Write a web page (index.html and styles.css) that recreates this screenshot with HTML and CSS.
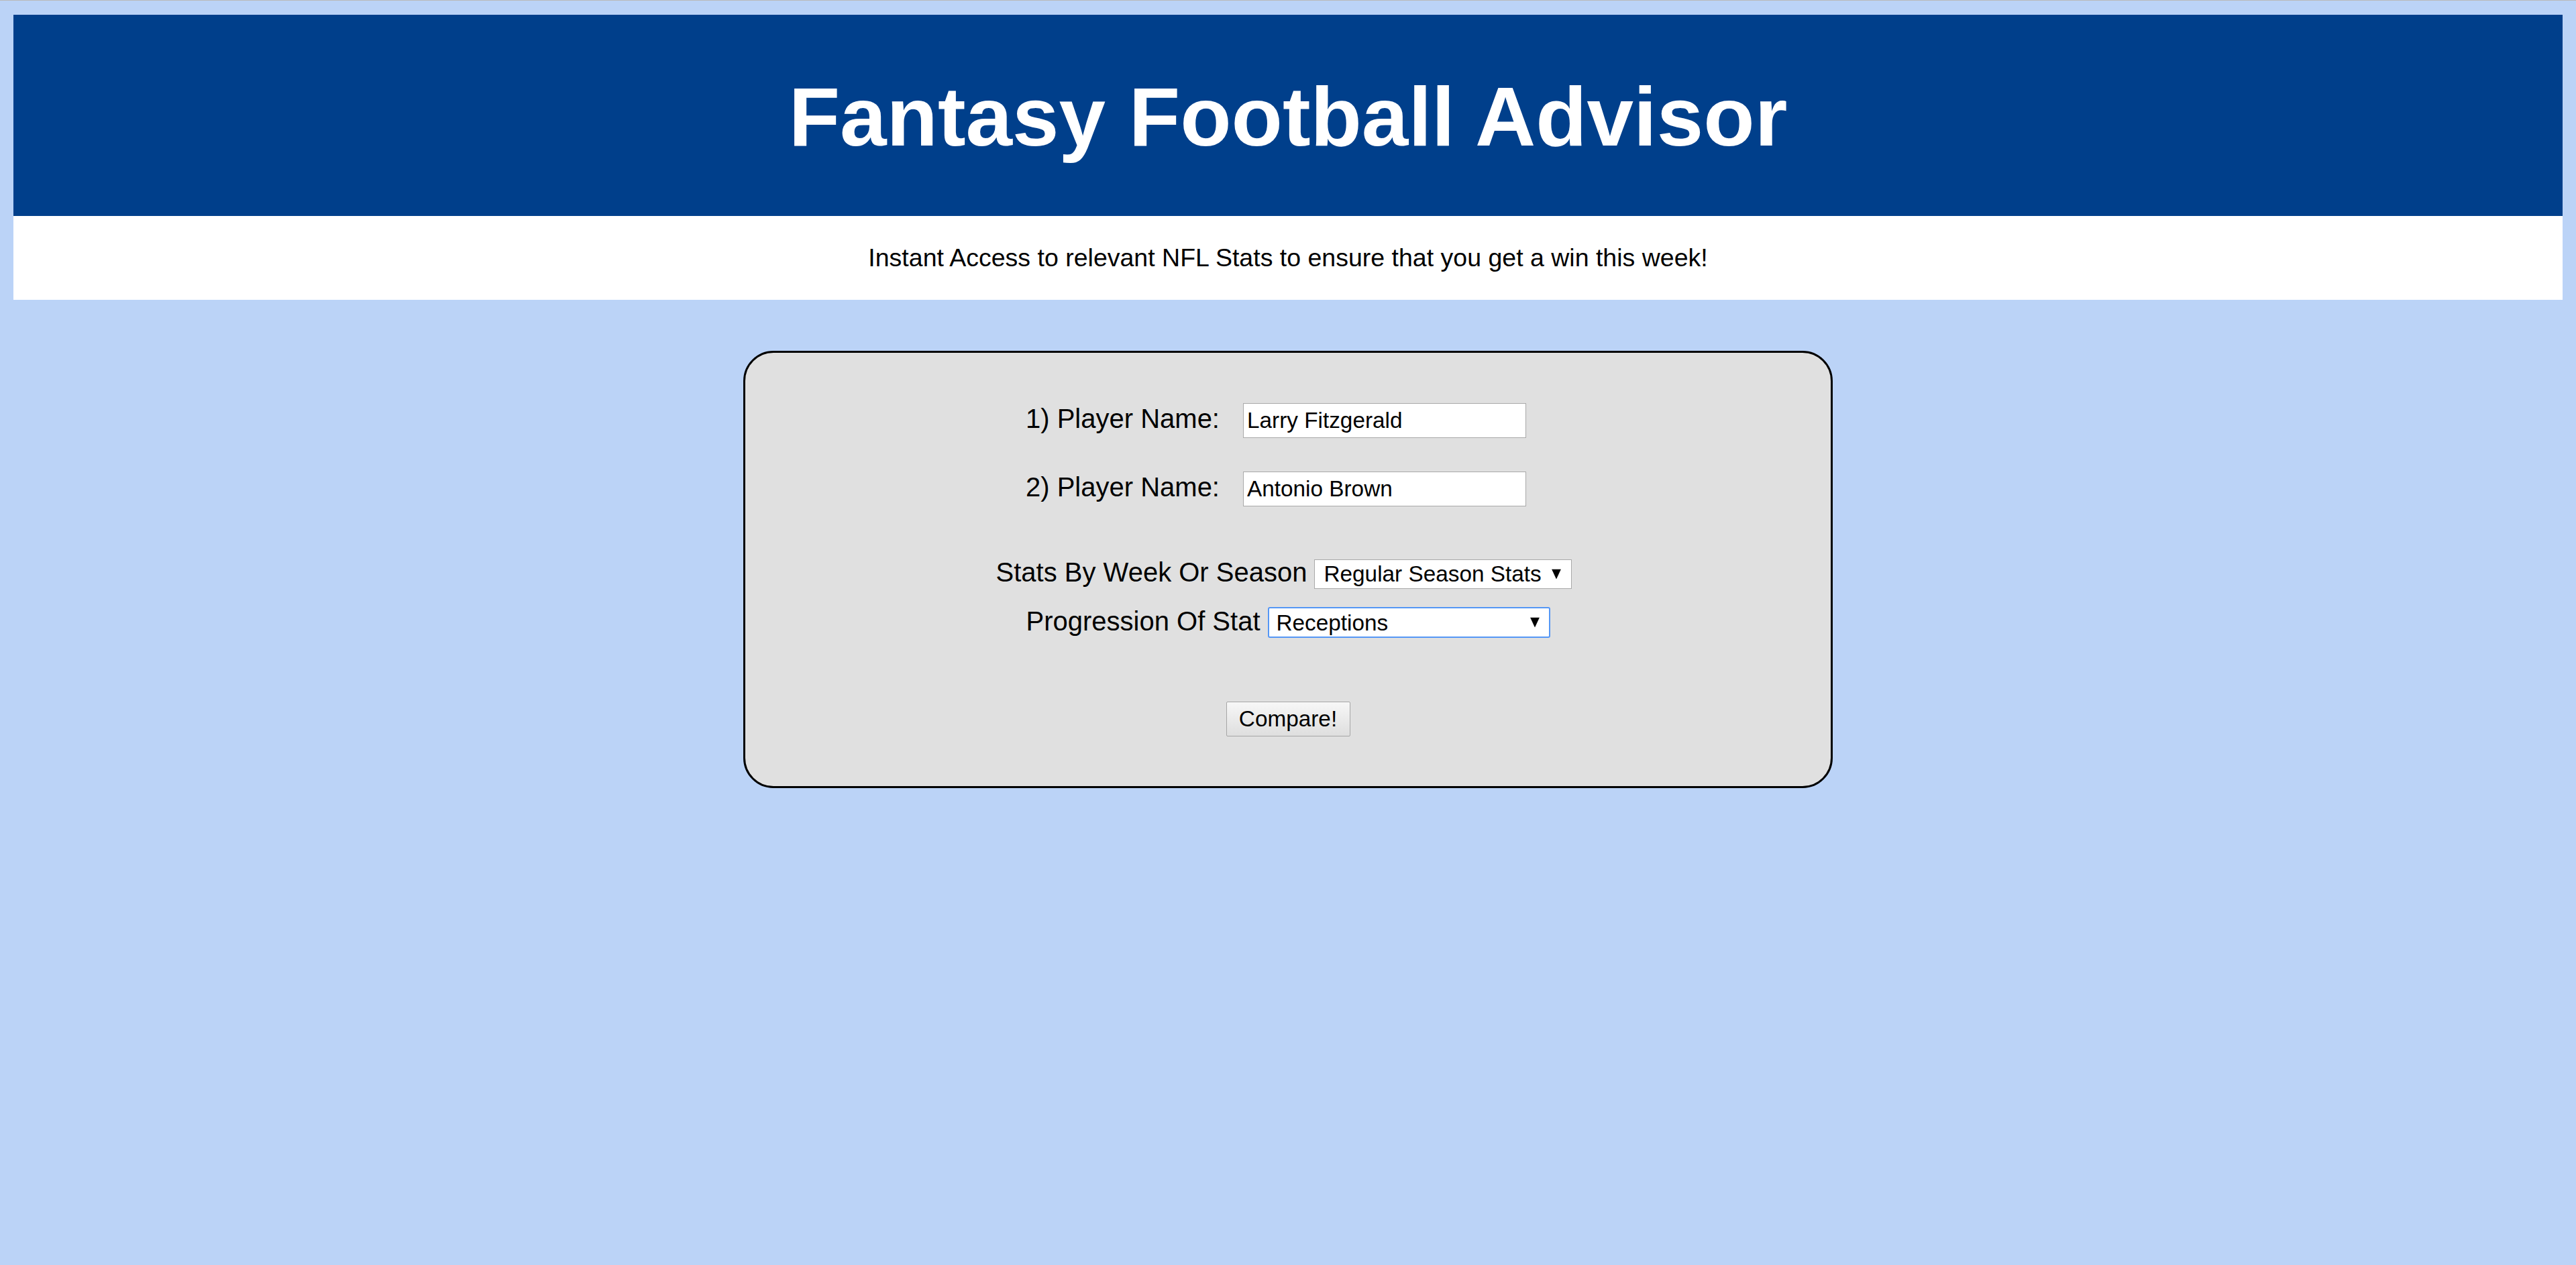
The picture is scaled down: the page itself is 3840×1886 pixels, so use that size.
FILE: index.html
```html
<!DOCTYPE html>
<html lang="en">
<head>
<meta charset="utf-8">
<title>Fantasy Football Advisor</title>
<link rel="stylesheet" href="styles.css">
</head>
<body>
  <header class="banner">
    <h1 class="banner-title">Fantasy Football Advisor</h1>
  </header>
  <div class="tagline">
    <p class="tagline-text">Instant Access to relevant NFL Stats to ensure that you get a win this week!</p>
  </div>

  <form class="card">
    <div class="row row-player">
      <label class="row-label" for="p1">1) Player Name:</label>
      <input class="text-input" id="p1" type="text" value="Larry Fitzgerald">
    </div>
    <div class="row row-player row-second">
      <label class="row-label" for="p2">2) Player Name:</label>
      <input class="text-input" id="p2" type="text" value="Antonio Brown">
    </div>
    <div class="row row-select row-period">
      <label class="row-label" for="period">Stats By Week Or Season</label>
      <span class="select-wrap">
        <select class="select select-period" id="period">
          <option>Regular Season Stats</option>
        </select>
        <svg class="select-arrow" width="14" height="15" viewBox="0 0 14 15" aria-hidden="true"><polygon points="0,0 14,0 7,15" fill="#000"/></svg>
      </span>
    </div>
    <div class="row row-select row-stat">
      <label class="row-label" for="stat">Progression Of Stat</label>
      <span class="select-wrap">
        <select class="select select-stat" id="stat">
          <option>Receptions</option>
        </select>
        <svg class="select-arrow" width="14" height="15" viewBox="0 0 14 15" aria-hidden="true"><polygon points="0,0 14,0 7,15" fill="#000"/></svg>
      </span>
    </div>
    <div class="row row-button">
      <button class="compare-btn" type="button">Compare!</button>
    </div>
  </form>
</body>
</html>
```

FILE: styles.css
```css
html {
  background: #bbd3f7;
  border-top: 1px solid #b9b9b9;
}

body {
  margin: 21px 20px 0;
  font-family: "Liberation Sans", Arial, sans-serif;
  color: #000;
}

.banner {
  background: #003f8b;
  height: 300px;
  box-sizing: border-box;
  padding-top: 80px;
}

.banner-title {
  margin: 0;
  font-size: 125px;
  font-weight: bold;
  line-height: normal;
  color: #fff;
  text-align: center;
}

.tagline {
  background: #fff;
  padding: 41px 0;
}

.tagline-text {
  margin: 0;
  font-size: 37.5px;
  line-height: 43px;
  text-align: center;
}

.card {
  display: flex;
  flex-direction: column;
  width: 1624px;
  box-sizing: border-box;
  margin: 76px auto 0;
  padding: 75px 0 74px;
  background: #e0e0e0;
  border: 3px solid #000;
  border-radius: 45px;
}

.row {
  display: flex;
  justify-content: center;
  align-items: baseline;
}

.row-label {
  font-size: 40px;
  line-height: 46px;
}

.row-player {
  gap: 35px;
  padding-right: 36px;
}

.row-second {
  margin-top: 50px;
}

.row-select {
  gap: 11px;
}

.row-period {
  margin-top: 75px;
  padding-right: 12px;
}

.row-stat {
  margin-top: 25px;
}

.text-input {
  box-sizing: border-box;
  width: 422px;
  height: 52px;
  margin: 0;
  padding: 0 5px;
  border: 1px solid #a9a9a9;
  border-radius: 0;
  background: #fff;
  font-family: "Liberation Sans", Arial, sans-serif;
  font-size: 33.33px;
  color: #000;
}

.select-wrap {
  position: relative;
  display: inline-block;
}

.select {
  -webkit-appearance: none;
  appearance: none;
  box-sizing: border-box;
  margin: 0;
  background: #fff;
  border-radius: 0;
  font-family: "Liberation Sans", Arial, sans-serif;
  font-size: 33.33px;
  color: #000;
  outline: none;
}

.select-period {
  width: 384px;
  height: 44px;
  padding: 0 40px 0 13px;
  border: 1px solid #a9a9a9;
}

.select-stat {
  width: 421px;
  height: 46px;
  padding: 0 40px 0 11px;
  border: 2px solid #5597f5;
  border-radius: 3px;
}

.select-arrow {
  position: absolute;
  right: 16px;
  top: 50%;
  transform: translateY(-50%);
  pointer-events: none;
}

.row-button {
  margin-top: 95px;
}

.compare-btn {
  box-sizing: border-box;
  width: 185px;
  height: 52px;
  margin: 0;
  padding: 0;
  border: 1px solid #a6a6a6;
  border-radius: 2px;
  background: linear-gradient(#f7f7f7, #dedede);
  font-family: "Liberation Sans", Arial, sans-serif;
  font-size: 33.33px;
  color: #000;
}
```
